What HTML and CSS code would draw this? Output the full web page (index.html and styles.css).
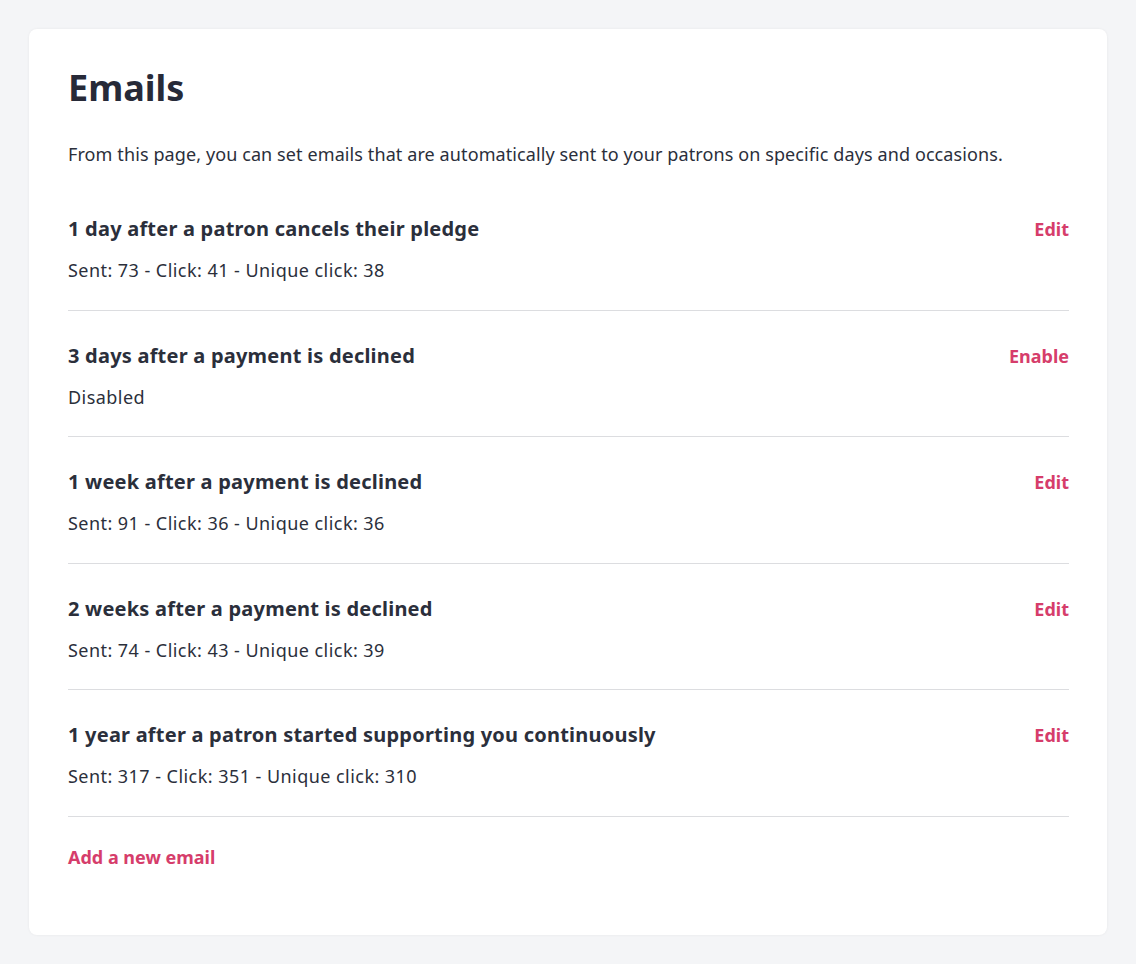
FILE: index.html
```html
<!DOCTYPE html>
<html lang="en">
<head>
  <meta charset="UTF-8" />
  <meta name="viewport" content="width=device-width, initial-scale=1.0" />
  <title>Emails</title>
  <link rel="stylesheet" href="styles.css">
</head>
<body>
  <div class="card">
    <h1 class="title">Emails</h1>
    <p class="intro">From this page, you can set emails that are automatically sent to your patrons on specific days and occasions.</p>

    <ul class="emails">
      <li class="email">
        <div class="email-head">
          <span class="email-name">1 day after a patron cancels their pledge</span>
          <a href="#" class="link">Edit</a>
        </div>
        <div class="email-stats">Sent: 73 - Click: 41 - Unique click: 38</div>
      </li>
      <li class="email">
        <div class="email-head">
          <span class="email-name">3 days after a payment is declined</span>
          <a href="#" class="link">Enable</a>
        </div>
        <div class="email-stats">Disabled</div>
      </li>
      <li class="email">
        <div class="email-head">
          <span class="email-name">1 week after a payment is declined</span>
          <a href="#" class="link">Edit</a>
        </div>
        <div class="email-stats">Sent: 91 - Click: 36 - Unique click: 36</div>
      </li>
      <li class="email">
        <div class="email-head">
          <span class="email-name">2 weeks after a payment is declined</span>
          <a href="#" class="link">Edit</a>
        </div>
        <div class="email-stats">Sent: 74 - Click: 43 - Unique click: 39</div>
      </li>
      <li class="email">
        <div class="email-head">
          <span class="email-name">1 year after a patron started supporting you continuously</span>
          <a href="#" class="link">Edit</a>
        </div>
        <div class="email-stats">Sent: 317 - Click: 351 - Unique click: 310</div>
      </li>
    </ul>

    <a href="#" class="link add">Add a new email</a>
  </div>
</body>
</html>
```

FILE: styles.css
```css
body {
  margin: 0;
  padding: 29px;
  background: #f4f5f7;
  font-family: "Noto Sans", "Open Sans", sans-serif;
  color: #2b2f3b;
}
.card {
  background: #fff;
  border-radius: 8px;
  box-shadow: 0 0 3px rgba(0, 0, 0, 0.06);
  padding: 39px 38px 66px 39px;
  height: 906px;
  box-sizing: border-box;
}
.title {
  margin: 0;
  font-size: 36px;
  line-height: 40px;
  font-weight: 700;
  color: #272a38;
  padding-top: 29px;
  margin-top: -29px;
}
.intro {
  margin: 32px 0 0;
  font-size: 18px;
  line-height: 28px;
  letter-spacing: 0.1px;
}
.emails {
  list-style: none;
  margin: 47px 0 0;
  padding: 0;
}
.email {
  padding: 0 0 25.5px;
  border-bottom: 1px solid #dcdde0;
  margin-bottom: 31px;
}
.email-head {
  display: flex;
  justify-content: space-between;
  align-items: center;
  line-height: 28px;
}
.email-name {
  font-size: 20px;
  font-weight: 700;
  letter-spacing: 0.22px;
}
.email-stats {
  margin-top: 13px;
  font-size: 18px;
  line-height: 28px;
  letter-spacing: 0.45px;
}
.link {
  color: #d63d6b;
  font-weight: 700;
  font-size: 18px;
  text-decoration: none;
}
.add {
  display: block;
  margin-top: -5px;
  line-height: 28px;
}
```
